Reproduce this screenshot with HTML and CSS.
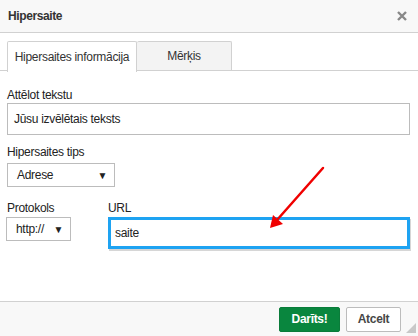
FILE: index.html
```html
<!DOCTYPE html>
<html lang="lv">
<head>
  <meta charset="UTF-8">
  <title>Hipersaite</title>
  <link rel="stylesheet" href="styles.css">
</head>
<body>
  <div class="dialog">
    <div class="dlg-header">
      <span class="dlg-title">Hipersaite</span>
      <svg class="dlg-close" width="10" height="10" viewBox="0 0 10 10">
        <path d="M1 1 L9 9 M9 1 L1 9" stroke="#888" stroke-width="2.4"/>
      </svg>
    </div>

    <div class="dlg-tabs">
      <div class="tab active">Hipersaites informācija</div>
      <div class="tab">Mērķis</div>
    </div>

    <div class="dlg-content">
      <div class="field">
        <label class="field-label">Attēlot tekstu</label>
        <div class="text-input">Jūsu izvēlētais teksts</div>
      </div>

      <div class="field">
        <label class="field-label">Hipersaites tips</label>
        <div class="select select-type">
          <span>Adrese</span>
          <span class="caret">&#9660;</span>
        </div>
      </div>

      <div class="field-row">
        <div class="field">
          <label class="field-label">Protokols</label>
          <div class="select select-proto">
            <span>http://</span>
            <span class="caret">&#9660;</span>
          </div>
        </div>
        <div class="field field-url">
          <label class="field-label">URL</label>
          <div class="text-input url-input">saite</div>
        </div>
      </div>
    </div>

    <div class="dlg-footer">
      <button class="btn btn-ok">Darīts!</button>
      <button class="btn btn-cancel">Atcelt</button>
      <span class="grip"></span>
    </div>

    <!-- annotation arrow -->
    <svg class="annot-arrow" width="418" height="336" viewBox="0 0 418 336">
      <line x1="323" y1="168" x2="277" y2="220" stroke="#f00000" stroke-width="2.5" stroke-linecap="round"/>
      <polygon points="270,228 273,215 283,224" fill="#f00000"/>
    </svg>
  </div>
</body>
</html>
```

FILE: styles.css
```css
* {
  margin: 0;
  padding: 0;
  box-sizing: border-box;
}

body {
  font-family: 'Liberation Sans', Arial, sans-serif;
  font-size: 12px;
  letter-spacing: -0.3px;
  color: #222;
  background: #fff;
}

.dialog {
  position: relative;
  width: 418px;
  height: 336px;
  display: flex;
  flex-direction: column;
  background: #fff;
}

/* header */
.dlg-header {
  height: 33px;
  background: #f8f8f8;
  border-bottom: 1px solid #d1d1d1;
  display: flex;
  align-items: center;
  justify-content: space-between;
  padding: 0 11px 1px 8px;
}

.dlg-title {
  font-weight: bold;
  font-size: 12px;
  letter-spacing: -0.4px;
  color: #333;
}

/* tabs */
.dlg-tabs {
  display: flex;
  margin-top: 8px;
  padding-left: 7px;
  border-bottom: 1px solid #d1d1d1;
  height: 30px;
}

.tab {
  height: 30px;
  border: 1px solid #d1d1d1;
  border-bottom: none;
  border-radius: 2px 2px 0 0;
  display: flex;
  align-items: center;
  justify-content: center;
  color: #333;
  font-size: 12px;
}

.tab.active {
  width: 130px;
  background: #fff;
  height: 31px;
  margin-bottom: -1px;
}

.tab + .tab {
  width: 95px;
  background: #f3f3f3;
  border-left: none;
  height: 29px;
}

/* form */
.dlg-content {
  flex: 1;
  padding: 16px 8px 0 7px;
}

.field-label {
  display: block;
  line-height: 16px;
  color: #222;
}

.field {
  margin-bottom: 9px;
}

.text-input {
  height: 32px;
  border: 1px solid #bcbcbc;
  padding: 0 6px;
  display: flex;
  align-items: center;
  color: #222;
}

.select {
  height: 24px;
  border: 1px solid #bcbcbc;
  display: flex;
  align-items: center;
  justify-content: space-between;
  padding: 0 7px 0 9px;
}

.caret {
  font-size: 10px;
}

.select-type {
  width: 108px;
  margin-top: 3px;
}

.field-row {
  display: flex;
  gap: 37px;
  margin-top: 13px;
}

.field-row .field {
  margin-bottom: 0;
}

.field-row .field-label {
  margin-bottom: 1px;
}

.select-proto {
  width: 65px;
  margin-left: -1px;
}

.field-url {
  flex: 1;
}

.url-input {
  border: 3px solid #1ea3f2;
  padding: 0 4px;
  box-shadow: 1px 2px 0 #d6d6d6;
}

/* footer */
.dlg-footer {
  position: relative;
  height: 35px;
  background: #f8f8f8;
  border-top: 1px solid #d1d1d1;
  display: flex;
  align-items: center;
  justify-content: flex-end;
  gap: 6px;
  padding: 0 17px 0 0;
}

.btn {
  height: 25px;
  font-family: 'Liberation Sans', Arial, sans-serif;
  font-size: 12px;
  font-weight: bold;
  letter-spacing: -0.3px;
  border-radius: 2px;
}

.btn-ok {
  width: 61px;
  background: #09863e;
  border: 1px solid #0a7c3a;
  color: #fff;
}

.btn-cancel {
  width: 55px;
  background: #fff;
  border: 1px solid #bcbcbc;
  color: #474747;
}

.grip {
  position: absolute;
  right: 2px;
  bottom: 3px;
  width: 0;
  height: 0;
  border-left: 10px solid transparent;
  border-bottom: 10px solid #c8c8c8;
}

.annot-arrow {
  position: absolute;
  left: 0;
  top: 0;
  pointer-events: none;
}
```
